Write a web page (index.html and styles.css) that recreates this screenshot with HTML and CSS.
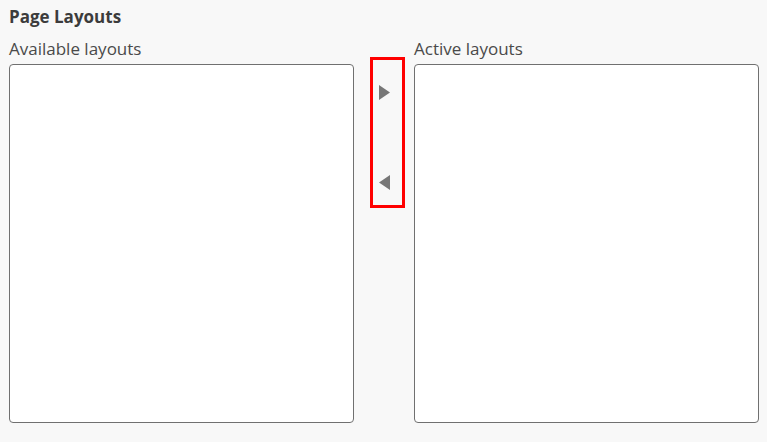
FILE: index.html
```html
<!DOCTYPE html>
<html>
<head>
<meta charset="utf-8">
<link rel="stylesheet" href="styles.css">
</head>
<body>
<div class="page">
  <h1 class="title">Page Layouts</h1>
  <div class="picker">
    <div class="column">
      <div class="label">Available layouts</div>
      <div class="listbox"></div>
    </div>
    <div class="middle">
      <div class="buttons">
        <button class="arrow" aria-label="Add">
          <svg width="11" height="15" viewBox="0 0 11 15"><polygon points="0,0 11,7.5 0,15" fill="#777"/></svg>
        </button>
        <button class="arrow" aria-label="Remove">
          <svg width="11" height="15" viewBox="0 0 11 15"><polygon points="11,0 0,7.5 11,15" fill="#777"/></svg>
        </button>
      </div>
    </div>
    <div class="column">
      <div class="label">Active layouts</div>
      <div class="listbox"></div>
    </div>
  </div>
</div>
</body>
</html>
```
FILE: styles.css
```css
html, body {
  margin: 0;
  padding: 0;
  background: #f8f8f8;
  font-family: "Open Sans", "Noto Sans", sans-serif;
  color: #444;
}
.page {
  padding: 5px 8px 0 9px;
}
.title {
  margin: 0;
  font-size: 17px;
  font-weight: 700;
  line-height: 24px;
  color: #3c3c3c;
}
.picker {
  display: flex;
  margin-top: 7px;
}
.column {
  width: 345px;
  display: flex;
  flex-direction: column;
}
.label {
  font-size: 17px;
  line-height: 24px;
  color: #4a4a4a;
  margin-top: 1px;
  margin-bottom: 3px;
}
.listbox {
  height: 357px;
  background: #fff;
  border: 1px solid #707070;
  border-radius: 4px;
}
.middle {
  width: 60px;
  padding: 21px 9px 0 16px;
  box-sizing: border-box;
}
.buttons {
  width: 35px;
  height: 151px;
  box-sizing: border-box;
  border: 3px solid #ff0000;
  display: flex;
  flex-direction: column;
  align-items: flex-start;
  padding: 25px 0 0 6px;
  gap: 75px;
}
.arrow {
  border: 0;
  background: none;
  padding: 0;
  width: 11px;
  height: 15px;
  display: block;
}
.arrow svg { display: block; }
```
